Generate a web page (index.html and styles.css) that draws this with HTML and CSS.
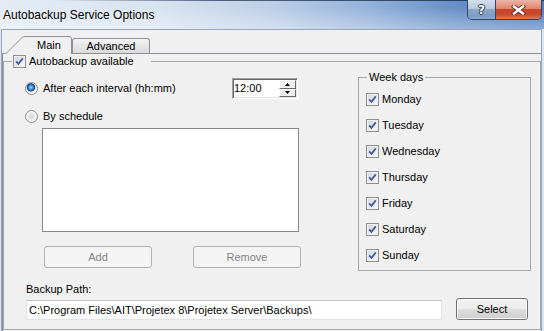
FILE: index.html
```html
<!DOCTYPE html>
<html>
<head>
<meta charset="utf-8">
<title>Autobackup Service Options</title>
<link rel="stylesheet" href="styles.css">
</head>
<body>
<div class="window">
  <div class="titlebar">
    <span class="title">Autobackup Service Options</span>
    <div class="caption-btns">
      <span class="cbtn help">?</span>
      <span class="cbtn close">
        <svg width="15" height="10" viewBox="0 0 15 10"><path d="M3 1.5 L12 8.5 M12 1.5 L3 8.5" stroke="#4a2418" stroke-width="4.4" stroke-linecap="square" opacity="0.75" fill="none"/><path d="M3 1.5 L12 8.5 M12 1.5 L3 8.5" stroke="#ffffff" stroke-width="2.4" stroke-linecap="square" fill="none"/></svg>
      </span>
    </div>
  </div>
  <div class="client">
    <div class="tabstrip">
      <div class="tab tab-main">
        <svg class="tab-shape" width="70" height="18" viewBox="0 0 70 18"><path d="M3 18 L20.5 1.2 Q21.4 0.5 23 0.5 L67 0.5 Q69.5 0.5 69.5 3 L69.5 18 Z" fill="#f0f0f0"/><path d="M3.5 18 L20.5 1.2 Q21.4 0.5 23 0.5 L67 0.5 Q69.5 0.5 69.5 3 L69.5 18" fill="none" stroke="#8d9097"/></svg>
        <span class="tab-label">Main</span>
      </div>
      <div class="tab tab-adv">Advanced</div>
    </div>
    <div class="sheet">
      <fieldset class="group">
        <legend class="group-cap">
          <span class="cap-inner">
            <span class="cb"><svg width="11" height="11" viewBox="0 0 11 11"><path d="M2.2 5.4 L4.4 7.9 L8.8 2.4" fill="none" stroke="#3f5a9c" stroke-width="1.7"/></svg></span>
            <span>Autobackup available</span>
          </span>
        </legend>
        <div class="main">
          <div class="left">
            <div class="row row-interval">
              <span class="rb on"></span>
              <span class="lbl">After each interval (hh:mm)</span>
              <div class="spin">
                <span class="spin-text">12:00</span>
                <div class="spin-btns">
                  <span class="sb"><svg width="5" height="3" viewBox="0 0 5 3"><polygon points="2.5,0 5,3 0,3" fill="#000"/></svg></span>
                  <span class="sb"><svg width="5" height="3" viewBox="0 0 5 3"><polygon points="0,0 5,0 2.5,3" fill="#000"/></svg></span>
                </div>
              </div>
            </div>
            <div class="row row-sched">
              <span class="rb"></span>
              <span class="lbl">By schedule</span>
            </div>
            <div class="listbox"></div>
            <div class="btnrow">
              <button class="btn btn-add" disabled>Add</button>
              <button class="btn btn-remove" disabled>Remove</button>
            </div>
          </div>
          <fieldset class="weekdays">
            <legend class="wd-cap">Week days</legend>
            <div class="day"><span class="cb"><svg width="11" height="11" viewBox="0 0 11 11"><path d="M2.2 5.4 L4.4 7.9 L8.8 2.4" fill="none" stroke="#3f5a9c" stroke-width="1.7"/></svg></span><span>Monday</span></div>
            <div class="day"><span class="cb"><svg width="11" height="11" viewBox="0 0 11 11"><path d="M2.2 5.4 L4.4 7.9 L8.8 2.4" fill="none" stroke="#3f5a9c" stroke-width="1.7"/></svg></span><span>Tuesday</span></div>
            <div class="day"><span class="cb"><svg width="11" height="11" viewBox="0 0 11 11"><path d="M2.2 5.4 L4.4 7.9 L8.8 2.4" fill="none" stroke="#3f5a9c" stroke-width="1.7"/></svg></span><span>Wednesday</span></div>
            <div class="day"><span class="cb"><svg width="11" height="11" viewBox="0 0 11 11"><path d="M2.2 5.4 L4.4 7.9 L8.8 2.4" fill="none" stroke="#3f5a9c" stroke-width="1.7"/></svg></span><span>Thursday</span></div>
            <div class="day"><span class="cb"><svg width="11" height="11" viewBox="0 0 11 11"><path d="M2.2 5.4 L4.4 7.9 L8.8 2.4" fill="none" stroke="#3f5a9c" stroke-width="1.7"/></svg></span><span>Friday</span></div>
            <div class="day"><span class="cb"><svg width="11" height="11" viewBox="0 0 11 11"><path d="M2.2 5.4 L4.4 7.9 L8.8 2.4" fill="none" stroke="#3f5a9c" stroke-width="1.7"/></svg></span><span>Saturday</span></div>
            <div class="day"><span class="cb"><svg width="11" height="11" viewBox="0 0 11 11"><path d="M2.2 5.4 L4.4 7.9 L8.8 2.4" fill="none" stroke="#3f5a9c" stroke-width="1.7"/></svg></span><span>Sunday</span></div>
          </fieldset>
        </div>
        <div class="path">
          <div class="path-label">Backup Path:</div>
          <div class="path-row">
            <div class="edit">C:\Program Files\AIT\Projetex 8\Projetex Server\Backups\</div>
            <button class="btn btn-select">Select</button>
          </div>
        </div>
      </fieldset>
    </div>
  </div>
</div>
</body>
</html>
```
FILE: styles.css
```css
html, body {
  margin: 0;
  padding: 0;
}
body {
  width: 544px;
  height: 331px;
  overflow: hidden;
  background: #dbe3ee;
  font-family: "Liberation Sans", Arial, sans-serif;
  font-size: 11px;
  color: #000;
}
.window {
  display: flex;
  flex-direction: column;
  height: 331px;
}

/* ---------- title bar ---------- */
.titlebar {
  height: 29px;
  flex: none;
  display: flex;
  align-items: flex-start;
  background:
    linear-gradient(to right, rgba(25,45,75,0) 10%, rgba(25,45,75,0.7) 40%, rgba(25,45,75,0.85) 100%) top left / 100% 1px no-repeat,
    linear-gradient(to bottom, rgba(255,255,255,0) 25%, rgba(255,255,255,0.35) 100%),
    linear-gradient(to right, #e4ebf5 0%, #d9e4f1 28%, #bccfe7 50%, #93b1da 68%, #6a93c9 82%, #5783c1 92%, #4d7cbd 100%);
}
.title {
  font-size: 12px;
  line-height: 13px;
  margin: 9px 0 0 3px;
  color: #000;
  text-shadow: 0 0 4px rgba(255,255,255,0.7);
}
.caption-btns {
  margin-left: auto;
  margin-right: 2px;
  display: flex;
  height: 20px;
  box-sizing: border-box;
  border: 1px solid #34445e;
  border-top: none;
  border-radius: 0 0 5px 5px;
  overflow: hidden;
}
.cbtn {
  display: flex;
  align-items: center;
  justify-content: center;
}
.help {
  width: 27px;
  border-right: 1px solid #34445e;
  background: linear-gradient(to bottom, #d4dfed 0%, #b7c7dd 45%, #8ea6c8 50%, #7c9ac4 85%, #8eabd3 100%);
  color: #fff;
  font-family: "DejaVu Sans", sans-serif;
  font-weight: bold;
  font-size: 12px;
  text-shadow: 1px 0 0 #2d3b52, -1px 0 0 #2d3b52, 0 1px 0 #2d3b52, 0 -1px 0 #2d3b52;
}
.close {
  width: 45px;
  background: linear-gradient(to bottom, #ecb6a8 0%, #df846e 45%, #c9462c 50%, #c9482c 75%, #de7c55 100%);
}

/* ---------- client ---------- */
.client {
  flex: 1;
  min-height: 0;
  margin: 0 2px 0 1px;
  border: 1px solid #97a5b9;
  border-bottom: none;
  background: #f0f0f0;
  display: flex;
  flex-direction: column;
}
.tabstrip {
  flex: none;
  height: 23px;
  display: flex;
  align-items: flex-end;
}
.tab {
  box-sizing: border-box;
  line-height: 13px;
}
.tab-main {
  position: relative;
  z-index: 1;
  width: 70px;
  height: 18px;
  margin-bottom: -1px;
  padding: 3px 0 0 35px;
}
.tab-shape {
  position: absolute;
  left: 0;
  top: 0;
}
.tab-label {
  position: relative;
}
.tab-adv {
  width: 78px;
  height: 15px;
  border: 1px solid #8d9097;
  border-bottom: none;
  border-radius: 3px 3px 0 0;
  background: linear-gradient(to bottom, #f4f4f4 0%, #e6e6e6 50%, #dadada 100%);
  text-align: center;
  padding-top: 1px;
}
.sheet {
  flex: 1;
  min-height: 0;
  border-top: 1px solid #8d9097;
  border-left: 1px solid #8d9097;
  background: #f0f0f0;
}

/* ---------- group boxes ---------- */
.group {
  margin: 0;
  padding: 0 0 9px 0;
  border: 1px solid #a7a7a7;
  min-width: 0;
}
.group-cap {
  margin-left: 8px;
  padding: 0 17px 0 1px;
  height: 14px;
}
.cap-inner {
  display: flex;
  align-items: center;
  gap: 3px;
  height: 14px;
  line-height: 13px;
}
.cb {
  flex: none;
  width: 13px;
  height: 13px;
  box-sizing: border-box;
  border: 1px solid #8e8f8f;
  background: linear-gradient(135deg, #cdd1d8 0%, #e9eaec 55%, #f8f8f8 100%);
  box-shadow: inset 0 0 0 1px #f2f2f2;
  display: flex;
}
.cb svg {
  display: block;
}
.rb {
  flex: none;
  width: 13px;
  height: 13px;
  box-sizing: border-box;
  border-radius: 50%;
  border: 1px solid #8b8b8b;
  background: radial-gradient(circle at 50% 50%, #d6d6d6 0, #e8e8e8 3px, #fbfbfb 5.5px);
}
.rb.on {
  background: radial-gradient(circle at 45% 40%, #b2e2ff 0, #56aef0 1.4px, #1f69b8 3px, #123f7c 3.8px, #dcdcdc 4.4px, #eeeeee 5px, #fbfbfb 5.5px);
}

.main {
  display: flex;
  align-items: flex-start;
}
.left {
  width: 297px;
  box-sizing: border-box;
  padding-left: 21px;
  flex: none;
}
.row {
  display: flex;
  align-items: center;
}
.lbl {
  margin-left: 5px;
  line-height: 13px;
}
.row-interval {
  margin-top: 10px;
  height: 21px;
  padding-right: 3px;
}
.spin {
  margin-left: auto;
  width: 66px;
  height: 21px;
  box-sizing: border-box;
  border: 1px solid;
  border-color: #a0a0a0 #ffffff #ffffff #a0a0a0;
  padding: 1px;
  box-shadow: inset 1px 1px 0 #696969, inset -1px -1px 0 #e3e3e3;
  background: #fff;
  display: flex;
  align-items: stretch;
}
.spin-text {
  flex: 1;
  display: flex;
  align-items: center;
  padding-left: 0;
  line-height: 13px;
}
.spin-btns {
  width: 17px;
  display: flex;
  flex-direction: column;
}
.sb {
  flex: 1;
  box-sizing: border-box;
  background: #f0f0f0;
  border: 1px solid;
  border-color: #ffffff #696969 #696969 #ffffff;
  display: flex;
  align-items: center;
  justify-content: center;
}
.sb svg {
  display: block;
}
.row-sched {
  margin-top: 11px;
  height: 13px;
}
.listbox {
  margin: 5px 0 0 17px;
  width: 257px;
  height: 104px;
  box-sizing: border-box;
  border: 1px solid #828790;
  background: #fff;
}
.btnrow {
  display: flex;
  margin-top: 14px;
}
.btn {
  font-family: "Liberation Sans", Arial, sans-serif;
  font-size: 11px;
  height: 22px;
  box-sizing: border-box;
  padding: 0;
  border-radius: 3px;
  line-height: 13px;
}
.btn-add, .btn-remove {
  width: 108px;
  border: 1px solid #adb2b5;
  background: #f4f4f4;
  color: #838383;
}
.btn-add {
  margin-left: 19px;
}
.btn-remove {
  margin-left: 41px;
}

.weekdays {
  margin: 2px 9px 0 auto;
  width: 173px;
  box-sizing: border-box;
  padding: 0 0 2px 7px;
  border: 1px solid #a7a7a7;
  min-width: 0;
}
.wd-cap {
  margin-left: 1px;
  padding: 0 2px;
  line-height: 14px;
  height: 14px;
}
.day {
  display: flex;
  align-items: center;
  gap: 3px;
  height: 26px;
  line-height: 13px;
}
.day:first-of-type {
  margin-top: 2px;
}

.path {
  padding-left: 22px;
  margin-top: 12px;
}
.path-label {
  line-height: 13px;
}
.path-row {
  margin-top: 2px;
  display: flex;
  align-items: flex-end;
}
.edit {
  width: 416px;
  height: 20px;
  box-sizing: border-box;
  border: 1px solid #e2e3ea;
  border-top-color: #c4c7cf;
  background: #fff;
  padding-left: 2px;
  display: flex;
  align-items: center;
  white-space: nowrap;
}
.btn-select {
  margin-left: 14px;
  width: 72px;
  border: 1px solid #707070;
  color: #000;
  background: linear-gradient(to bottom, #f2f2f2 0%, #ebebeb 50%, #dddddd 51%, #cfcfcf 100%);
  box-shadow: inset 0 0 0 1px #fcfcfc;
}
```
